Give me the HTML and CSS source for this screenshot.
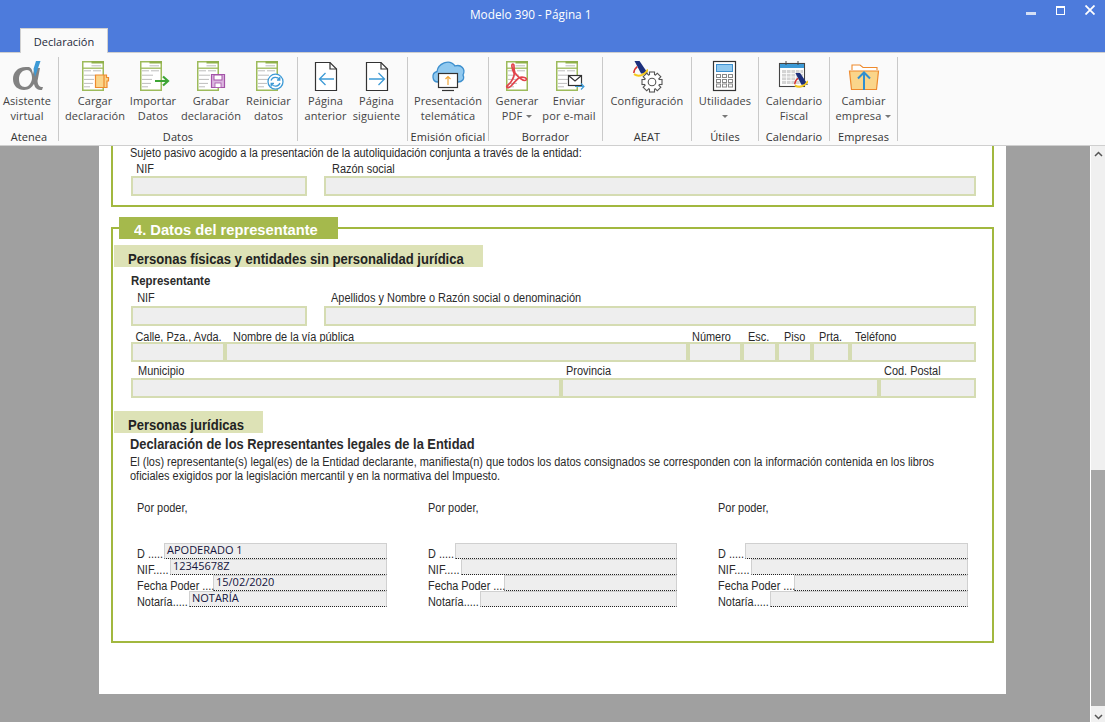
FILE: index.html
```html
<!DOCTYPE html>
<html lang="es">
<head>
<meta charset="utf-8">
<title>Modelo 390 - Página 1</title>
<link rel="stylesheet" href="styles.css">
</head>
<body>
<svg class="sprite" aria-hidden="true">
  <symbol id="doc" viewBox="0 0 22 30">
    <rect x=".75" y=".75" width="20.5" height="28.5" fill="#fff" stroke="#9dbb5b" stroke-width="1.5"/>
    <rect x="9.5" y="0" width="12.5" height="2.5" fill="#8fb04a"/>
    <path d="M0 7.2H22" stroke="#9dbb5b" stroke-width="1.3"/>
    <path d="M9.5 4.8H19M2 9.8H9M11 9.8H19M2 14.2H13M2 18.4H12M2 22.4H11M2 25.8H8" stroke="#bdbdbd" stroke-width="1"/>
  </symbol>
  <symbol id="aeat" viewBox="0 0 15 16">
    <path d="M1.5 0H6.5L15 12.5H8Z" fill="#1c2f7c"/>
    <path d="M1 13.2C6 16.5 12 14 15 8.5" fill="none" stroke="#f5c91d" stroke-width="2"/>
    <path d="M.8 12C1 9 2.4 7 4.3 5.6" fill="none" stroke="#d8322f" stroke-width="1.5"/>
  </symbol>
</svg>

<header class="titlebar">
  <div class="title-row">
    <span class="title">Modelo 390 - Página 1</span>
    <div class="caption">
      <span class="cap-min"></span>
      <span class="cap-max"></span>
      <svg class="cap-close" width="10" height="10" viewBox="0 0 10 10"><path d="M.5.5L9.5 9.5M9.5.5L.5 9.5" stroke="#fff" stroke-width="1.8"/></svg>
    </div>
  </div>
  <div class="tab">Declaración</div>
</header>

<nav class="ribbon">
  <section class="group g-atenea">
    <div class="btns">
      <div class="btn w54">
        <svg class="ico" viewBox="0 0 40 36"><path fill-rule="evenodd" d="M21 10C11 9 6 15 6 22C6 29 11 33 17 33C22 33 25 30 27 27C28 31 30 33 35 33L36 30C32 30 31 28 30.500 24L33 11H27.500L26 17C25 12 24 10 21 10ZM20 13C15 13 12 17 12 22C12 27 14 30 18 30C22 30 25 25 25 21C25 16 23 13 20 13Z" fill="#828282"/><path d="M29 4H33.500L28 20L26.500 12Z" fill="#3d9ad6"/></svg>
        <span class="lbl">Asistente<br>virtual</span>
      </div>
    </div>
    <div class="gname">Atenea</div>
  </section>
  <section class="group g-datos">
    <div class="btns">
      <div class="btn w58">
        <svg class="ico" viewBox="0 0 40 36"><use href="#doc" x="7" y="4" width="22" height="30"/><path d="M20.5 18H31.500V20.500H33.500V24H32V30.500H20.500Z" fill="#fad58a" stroke="#ee8a2d" stroke-width="1.2"/><path d="M29 18V30.500" stroke="#ee8a2d" stroke-width="1.200"/></svg>
        <span class="lbl">Cargar<br>declaración</span>
      </div>
      <div class="btn w58">
        <svg class="ico" viewBox="0 0 40 36"><use href="#doc" x="7" y="4" width="22" height="30"/><path d="M22 24H34M30 19.500L35 24L30 28.500" fill="none" stroke="#3da535" stroke-width="2.200"/></svg>
        <span class="lbl">Importar<br>Datos</span>
      </div>
      <div class="btn w58">
        <svg class="ico" viewBox="0 0 40 36"><use href="#doc" x="6" y="4" width="22" height="30"/><path d="M20.500 17.500H33.500V30.500H20.500Z" fill="#dcb6e0" stroke="#a454a8" stroke-width="1.200"/><rect x="23" y="18" width="8" height="5" fill="#fff" stroke="#a454a8"/><rect x="24" y="26" width="6" height="4.500" fill="#fff" stroke="#a454a8" stroke-width=".8"/></svg>
        <span class="lbl">Grabar<br>declaración</span>
      </div>
      <div class="btn w57">
        <svg class="ico" viewBox="0 0 40 36"><use href="#doc" x="7" y="4" width="22" height="30"/><circle cx="26.500" cy="24.700" r="7.500" fill="#fff" stroke="#3d9ad6" stroke-width="1.300"/><path d="M22 23.500A4.800 4.800 0 0 1 30.500 22.500M31 26A4.800 4.800 0 0 1 22.500 27M30.800 20V23H28M22.200 29.500V26.500H25" fill="none" stroke="#3d9ad6" stroke-width="1.300"/></svg>
        <span class="lbl">Reiniciar<br>datos</span>
      </div>
    </div>
    <div class="gname">Datos</div>
  </section>
  <section class="group g-pag">
    <div class="btns">
      <div class="btn w51">
        <svg class="ico" viewBox="0 0 40 36"><path d="M9.500 5.500H24L30.500 12V33.500H9.500Z" fill="#fff" stroke="#333" stroke-width="1.200"/><path d="M24 5.500V12H30.500" fill="none" stroke="#333" stroke-width="1.200"/><path d="M28 22H13.500M19.500 16L13.500 22L19.500 28" fill="none" stroke="#3d9ad6" stroke-width="1.300"/></svg>
        <span class="lbl">Página<br>anterior</span>
      </div>
      <div class="btn w51">
        <svg class="ico" viewBox="0 0 40 36"><path d="M9.500 5.500H24L30.500 12V33.500H9.500Z" fill="#fff" stroke="#333" stroke-width="1.200"/><path d="M24 5.500V12H30.500" fill="none" stroke="#333" stroke-width="1.200"/><path d="M12 22H27.500M21.500 16L27.500 22L21.500 28" fill="none" stroke="#3d9ad6" stroke-width="1.300"/></svg>
        <span class="lbl">Página<br>siguiente</span>
      </div>
    </div>
    <div class="gname"></div>
  </section>
  <section class="group g-emi">
    <div class="btns">
      <div class="btn w70">
        <svg class="ico" viewBox="0 0 40 36"><path d="M10 25C4 25 3 16 9 14.500C10 7 21 1 27 9C33 7 38 12 35 18C37 22 34 25 30 25Z" fill="#91c9ef" stroke="#3d8fce" stroke-width="1.300"/><rect x="10.500" y="16.500" width="19" height="14" fill="#fff" stroke="#333" stroke-width="1.200"/><path d="M14 33.500H26" stroke="#333" stroke-width="1.200"/><path d="M20 28V19.500M17.500 22L20 19.500L22.500 22" fill="none" stroke="#f0a73a" stroke-width="1.200"/></svg>
        <span class="lbl">Presentación<br>telemática</span>
      </div>
    </div>
    <div class="gname">Emisión oficial</div>
  </section>
  <section class="group g-bor">
    <div class="btns">
      <div class="btn w52">
        <svg class="ico" viewBox="0 0 40 36"><use href="#doc" x="9" y="4" width="22" height="30"/><path d="M16 7C14 7 15 12 17 16C18 19 14 26 11 28C8 30 11 32 14 29C17 26 20 22 22 21C25 19 31 21 29 23C27 25 21 20 18 16C16 12 18 7 16 7Z" fill="none" stroke="#e2434b" stroke-width="1.700"/></svg>
        <span class="lbl">Generar<br>PDF<i class="caret"></i></span>
      </div>
      <div class="btn w52">
        <svg class="ico" viewBox="0 0 40 36"><use href="#doc" x="7" y="4" width="22" height="30"/><rect x="19.500" y="18.500" width="13" height="10" fill="#fff" stroke="#333" stroke-width="1.200"/><path d="M19.500 18.500L26 24L32.500 18.500" fill="none" stroke="#333" stroke-width="1.200"/><path d="M26 29.500H35M32 26.500L35 29.500L32 32.500" fill="none" stroke="#3d9ad6" stroke-width="1.100"/></svg>
        <span class="lbl">Enviar<br>por e-mail</span>
      </div>
    </div>
    <div class="gname">Borrador</div>
  </section>
  <section class="group g-aeat">
    <div class="btns">
      <div class="btn w80">
        <svg class="ico" viewBox="0 0 40 36"><use href="#aeat" x="6" y="4" width="15" height="16"/><circle cx="25" cy="25" r="7.700" fill="#fff" stroke="#555" stroke-width="1.100"/><g fill="#fff" stroke="#555" stroke-width="1.100"><rect x="22.500" y="15" width="5" height="20"/><rect x="22.500" y="15" width="5" height="20" transform="rotate(45 25 25)"/><rect x="22.500" y="15" width="5" height="20" transform="rotate(90 25 25)"/><rect x="22.500" y="15" width="5" height="20" transform="rotate(135 25 25)"/></g><circle cx="25" cy="25" r="7.200" fill="#fff"/><circle cx="25" cy="25" r="3.800" fill="#fff" stroke="#555" stroke-width="1.100"/></svg>
        <span class="lbl">Configuración</span>
      </div>
    </div>
    <div class="gname">AEAT</div>
  </section>
  <section class="group g-uti">
    <div class="btns">
      <div class="btn w60">
        <svg class="ico" viewBox="0 0 40 36"><rect x="8.500" y="4.500" width="22" height="29" fill="#fff" stroke="#333" stroke-width="1.200"/><rect x="11.500" y="7.500" width="16" height="7" fill="#91c9ef" stroke="#3d8fce"/><g fill="none" stroke="#888"><rect x="11.500" y="17.500" width="4" height="3"/><rect x="17.500" y="17.500" width="4" height="3"/><rect x="23.500" y="17.500" width="4" height="3"/><rect x="11.500" y="22.500" width="4" height="3"/><rect x="17.500" y="22.500" width="4" height="3"/><rect x="23.500" y="22.500" width="4" height="3"/><rect x="11.500" y="27" width="4" height="3"/><rect x="17.500" y="27" width="4" height="3"/><rect x="23.500" y="27" width="4" height="3"/></g></svg>
        <span class="lbl">Utilidades<br><i class="caret solo"></i></span>
      </div>
    </div>
    <div class="gname">Útiles</div>
  </section>
  <section class="group g-cal">
    <div class="btns">
      <div class="btn w60">
        <svg class="ico" viewBox="0 0 40 36"><rect x="5.500" y="6.500" width="25" height="23" fill="#fff" stroke="#444" stroke-width="1.100"/><rect x="6" y="7" width="24" height="4" fill="#3d9ad6"/><path d="M12 4V8M24 4V8" stroke="#444"/><g fill="#d4d4d4"><rect x="8" y="13" width="21" height="14"/></g><path d="M8 16.500H29M8 20H29M8 23.500H29M12.500 13V27M17 13V27M21.500 13V27M26 13V27" stroke="#fff" stroke-width=".8"/><use href="#aeat" x="20" y="16" width="14" height="15"/></svg>
        <span class="lbl">Calendario<br>Fiscal</span>
      </div>
    </div>
    <div class="gname">Calendario</div>
  </section>
  <section class="group g-emp">
    <div class="btns">
      <div class="btn w64">
        <svg class="ico" viewBox="0 0 40 36"><path d="M8 13V8H16L19 10.500H33V13" fill="#fff" stroke="#ee8a2d" stroke-width="1.100"/><path d="M5.500 14H34.500L32.500 32.500H7.500Z" fill="#fad58a" stroke="#ee8a2d" stroke-width="1.200"/><path d="M20 33V15.500M14 21.500L20 15.500L26 21.500" fill="none" stroke="#2f8fd0" stroke-width="2"/></svg>
        <span class="lbl">Cambiar<br>empresa<i class="caret"></i></span>
      </div>
    </div>
    <div class="gname">Empresas</div>
  </section>
</nav>

<main class="workspace">
  <div class="viewer">
    <article class="page">
      <section class="box box-top">
        <p class="txt intro">Sujeto pasivo acogido a la presentación de la autoliquidación conjunta a través de la entidad:</p>
        <div class="labels mb0">
          <span class="c-nif1">NIF</span>
          <span>Razón social</span>
        </div>
        <div class="fields">
          <div class="f w176"></div>
          <div class="f w652 ml17"></div>
        </div>
      </section>

      <section class="box box-rep">
        <h2 class="tabhead"><span class="sq">4. Datos del representante</span></h2>
        <h3 class="sub sub-a"><span class="sq">Personas físicas y entidades sin personalidad jurídica</span></h3>
        <h4 class="rep"><span class="sq">Representante</span></h4>
        <div class="labels mt3 mb1">
          <span class="c-nif2">NIF</span>
          <span>Apellidos y Nombre o Razón social o denominación</span>
        </div>
        <div class="fields">
          <div class="f w176"></div>
          <div class="f w652 ml17"></div>
        </div>
        <div class="labels mt4 mbn2">
          <span class="c-calle">Calle, Pza., Avda.</span>
          <span class="c-via">Nombre de la vía pública</span>
          <span class="c-num">Número</span>
          <span class="c-esc">Esc.</span>
          <span class="c-piso">Piso</span>
          <span class="c-prta">Prta.</span>
          <span>Teléfono</span>
        </div>
        <div class="fields">
          <div class="f w94"></div>
          <div class="f w463"></div>
          <div class="f w54"></div>
          <div class="f w35"></div>
          <div class="f w35"></div>
          <div class="f w38"></div>
          <div class="f w126"></div>
        </div>
        <div class="labels mt2 mb0">
          <span class="c-mun">Municipio</span>
          <span class="c-prov">Provincia</span>
          <span>Cod. Postal</span>
        </div>
        <div class="fields">
          <div class="f w430"></div>
          <div class="f w318"></div>
          <div class="f w97"></div>
        </div>
        <h3 class="sub sub-b"><span class="sq">Personas jurídicas</span></h3>
        <h4 class="decl"><span class="sq">Declaración de los Representantes legales de la Entidad</span></h4>
        <p class="txt para">El (los) representante(s) legal(es) de la Entidad declarante, manifiesta(n) que todos los datos consignados se corresponden con la información contenida en los libros<br>oficiales exigidos por la legislación mercantil y en la normativa del Impuesto.</p>
        <div class="signs">
          <div class="sign">
            <p class="txt poder">Por poder,</p>
            <div class="srow"><span class="sl l-d"><span class="sq">D .....</span></span><span class="sv">APODERADO 1</span></div>
            <div class="srow"><span class="sl l-n"><span class="sq">NIF.....</span></span><span class="sv">12345678Z</span></div>
            <div class="srow"><span class="sl l-f"><span class="sq">Fecha Poder ....</span></span><span class="sv">15/02/2020</span></div>
            <div class="srow"><span class="sl l-o"><span class="sq">Notaría.....</span></span><span class="sv">NOTARÍA</span></div>
          </div>
          <div class="sign">
            <p class="txt poder">Por poder,</p>
            <div class="srow"><span class="sl l-d"><span class="sq">D .....</span></span><span class="sv"></span></div>
            <div class="srow"><span class="sl l-n"><span class="sq">NIF.....</span></span><span class="sv"></span></div>
            <div class="srow"><span class="sl l-f"><span class="sq">Fecha Poder ....</span></span><span class="sv"></span></div>
            <div class="srow"><span class="sl l-o"><span class="sq">Notaría.....</span></span><span class="sv"></span></div>
          </div>
          <div class="sign">
            <p class="txt poder">Por poder,</p>
            <div class="srow"><span class="sl l-d"><span class="sq">D .....</span></span><span class="sv"></span></div>
            <div class="srow"><span class="sl l-n"><span class="sq">NIF.....</span></span><span class="sv"></span></div>
            <div class="srow"><span class="sl l-f"><span class="sq">Fecha Poder ....</span></span><span class="sv"></span></div>
            <div class="srow"><span class="sl l-o"><span class="sq">Notaría.....</span></span><span class="sv"></span></div>
          </div>
        </div>
      </section>
    </article>
  </div>
  <aside class="scrollbar">
    <svg class="arrow" width="9" height="6" viewBox="0 0 9 6"><path d="M1 5L4.500 1.500L8 5" fill="none" stroke="#555" stroke-width="1.500"/></svg>
    <div class="track"><div class="thumb"></div></div>
    <svg class="arrow" width="9" height="6" viewBox="0 0 9 6"><path d="M1 1L4.500 4.500L8 1" fill="none" stroke="#555" stroke-width="1.500"/></svg>
  </aside>
</main>
</body>
</html>
```

FILE: styles.css
```css
* { box-sizing: border-box; }
html, body { margin: 0; padding: 0; height: 100%; overflow: hidden; }
body {
  width: 1105px;
  height: 722px;
  display: flex;
  flex-direction: column;
  font-family: "Open Sans", "Noto Sans", sans-serif;
  background: #a0a0a0;
}
.sprite { width: 0; height: 0; position: absolute; }

/* title bar */
.titlebar { height: 52px; background: #4d7bdc; flex: none; }
.title-row { height: 28px; display: flex; align-items: flex-start; padding-left: 470px; }
.title { color: #fff; font-size: 11.800px; line-height: 28px; }
.caption { margin-left: auto; display: flex; align-items: flex-start; }
.cap-min { width: 10px; height: 3px; background: #d5dff5; margin: 12px 20px 0 0; }
.cap-max { width: 9px; height: 9px; border: 1px solid #fff; border-top-width: 2px; margin: 6px 20px 0 0; }
.cap-close { margin: 5px 10px 0 0; }
.tab {
  width: 88px;
  height: 25px;
  margin-left: 20px;
  background: #fafafa;
  border: 1px solid #d0d0d0;
  border-bottom: 0;
  position: relative;
  z-index: 1;
  color: #1e2a3a;
  font-size: 11px;
  line-height: 25px;
  text-align: center;
}

/* ribbon */
.ribbon {
  height: 94px;
  flex: none;
  display: flex;
  background: #fafafa;
  border-top: 1px solid #cfcfcf;
  border-bottom: 1px solid #cfcfcf;
  padding-top: 4px;
}
.group {
  height: 84px;
  display: flex;
  flex-direction: column;
  border-right: 1px solid #c9c9c9;
  flex: none;
}
.g-atenea { width: 59px; }
.g-datos { width: 239px; }
.g-pag { width: 110px; }
.g-emi { width: 81px; }
.g-bor { width: 114px; }
.g-aeat { width: 89px; }
.g-uti { width: 67px; }
.g-cal { width: 71px; }
.g-emp { width: 68px; }
.btns { display: flex; justify-content: center; height: 67px; flex: none; }
.g-atenea .btns { padding-right: 4px; }
.g-datos .btns { justify-content: flex-start; padding-left: 7px; }
.g-pag .btns { justify-content: flex-start; padding-left: 2px; }
.g-bor .btns { justify-content: flex-start; padding-left: 2px; }
.btn { display: flex; flex-direction: column; align-items: center; flex: none; }
.w51 { width: 51px; } .w52 { width: 52px; } .w54 { width: 54px; } .w57 { width: 57px; }
.w58 { width: 58px; } .w60 { width: 60px; } .w64 { width: 64px; } .w70 { width: 70px; } .w80 { width: 80px; }
.ico { width: 40px; height: 36px; display: block; flex: none; }
.lbl {
  font-size: 11px;
  letter-spacing: .1px;
  line-height: 15px;
  color: #444;
  text-align: center;
  white-space: nowrap;
}
.gname {
  height: 14px;
  font-size: 11px;
  letter-spacing: .1px;
  line-height: 14px;
  color: #333;
  text-align: center;
  white-space: nowrap;
  margin-top: 6px;
  flex: none;
}
.caret {
  display: inline-block;
  width: 0;
  height: 0;
  margin: 0 0 2px 4px;
  border: 3px solid transparent;
  border-top: 3px solid #777;
  border-bottom: 0;
}
.caret.solo { margin-left: 0; }

/* workspace */
.workspace { flex: 1; display: flex; min-height: 0; background: #fff; }
.viewer { width: 1090px; background: #a0a0a0; overflow: hidden; }
.page {
  width: 907px;
  height: 548px;
  margin-left: 99px;
  background: #fff;
  padding-left: 12px;
  font-family: "Liberation Sans", Arial, sans-serif;
  color: #2a2a2a;
  overflow: hidden;
}
.scrollbar {
  width: 14px;
  margin-left: 1px;
  background: #f0f0f0;
  display: flex;
  flex-direction: column;
  align-items: center;
}
.arrow { flex: none; margin: 5px 0; }
.track { flex: 1; width: 100%; padding-top: 308px; margin-bottom: 3px; }
.thumb { height: 236px; background: #a6a6a6; }

/* condensed print type of the PDF form */
.sq { display: inline-block; transform-origin: 0 50%; white-space: nowrap; }
.txt { margin: 0; font-size: 12.500px; line-height: 14px; white-space: nowrap; transform: scaleX(.876); transform-origin: 0 50%; }
.labels { display: flex; height: 14px; margin-left: 18px; font-size: 12.500px; line-height: 14px; white-space: nowrap; }
.labels span { transform: scaleX(.876); transform-origin: 0 50%; }

/* form */
.box { width: 883px; border: 2px solid #a2b83f; }
.box-top { height: 61px; border-top: 0; }
.box-rep { margin-top: 20px; height: 416px; }
.intro { margin-left: 17px; }
.intro + .labels { margin-top: 2px; }
.mt2 { margin-top: 2px; } .mt3 { margin-top: 3px; } .mt4 { margin-top: 4px; }
.mb0 { margin-bottom: 0; } .mb1 { margin-bottom: 1px; } .mbn2 { margin-bottom: -2px; }
.c-nif1 { width: 201px; padding-left: 6px; }
.c-nif2 { width: 200px; padding-left: 7px; }
.c-calle { width: 102px; padding-left: 5px; }
.c-via { width: 459px; }
.c-num { width: 56px; }
.c-esc { width: 36px; }
.c-piso { width: 35px; }
.c-prta { width: 36px; }
.c-mun { width: 435px; padding-left: 8px; }
.c-prov { width: 318px; }
.fields { display: flex; margin-left: 18px; position: relative; }
.f { height: 20px; background: #eee; border: 2px solid #d5dcb2; flex: none; }
.ml17 { margin-left: 17px; }
.w176 { width: 176px; } .w652 { width: 652px; } .w94 { width: 94px; } .w463 { width: 463px; }
.w54 { width: 54px; } .w35 { width: 35px; } .w38 { width: 38px; } .w126 { width: 126px; }
.w430 { width: 430px; } .w318 { width: 318px; } .w97 { width: 97px; }

.tabhead {
  width: 219px;
  height: 22px;
  margin: -12px 0 0 6px;
  padding-left: 15px;
  background: #a5b94c;
  color: #fff;
  font-size: 15.500px;
  line-height: 25px;
  font-weight: 700;
  white-space: nowrap;
}
.tabhead .sq { transform: scaleX(.948); }
.sub {
  height: 22px;
  margin: 0 0 0 1px;
  padding-left: 14px;
  background: #dde2b6;
  color: #222;
  font-size: 14px;
  line-height: 29px;
  font-weight: 700;
  white-space: nowrap;
}
.sub .sq { transform: scaleX(.932); }
.sub-a { width: 369px; margin-top: 6px; }
.sub-b { width: 149px; margin-top: 13px; }
.rep { margin: 7px 0 0 18px; height: 14px; font-size: 13.500px; line-height: 14px; font-weight: 700; }
.rep .sq { transform: scaleX(.845); }
.decl { margin: 3px 0 0 17px; height: 16px; font-size: 14.500px; line-height: 16px; font-weight: 700; white-space: nowrap; }
.decl .sq { transform: scaleX(.887); }
.para { margin: 3px 0 0 17px; }
.signs { display: flex; margin: 18px 0 0 24px; }
.sign { width: 249.500px; margin-right: 41px; flex: none; }
.poder { height: 42px; }
.srow { display: flex; height: 16px; font-size: 12.500px; }
.sl { flex: none; line-height: 23px; white-space: nowrap; }
.sl .sq { transform: scaleX(.87); }
.l-d { width: 27px; } .l-n { width: 33px; } .l-f { width: 76px; } .l-o { width: 52px; }
.sv {
  flex: 1;
  background: #eee;
  border: 1px solid #d0d0d0;
  border-bottom: 1px dotted #222;
  padding-left: 2px;
  font-family: "Open Sans", "Noto Sans", sans-serif;
  font-size: 11px;
  line-height: 12px;
  color: #14143c;
}
```
